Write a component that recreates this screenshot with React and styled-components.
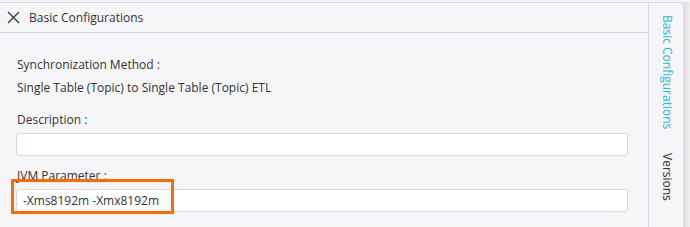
import React from 'react';
import styled, { createGlobalStyle } from 'styled-components';

const Global = createGlobalStyle`
  html, body { margin: 0; padding: 0; }
  body {
    background: #f6f6f9;
    font-family: 'Open Sans', 'Noto Sans', sans-serif;
    color: #333;
  }
`;

const Page = styled.div`
  width: 690px;
  height: 227px;
  padding-top: 2px;
  box-sizing: border-box;
  display: flex;
  overflow: hidden;
`;

const Frame = styled.div`
  flex: 1;
  display: flex;
  border-top: 1px solid #d3d5ea;
`;

const Main = styled.div`
  width: 648px;
  border-right: 1px solid #d3d5ea;
  display: flex;
  flex-direction: column;
`;

const Header = styled.div`
  height: 29px;
  border-bottom: 1px solid #d3d5ea;
  display: flex;
  align-items: center;
  gap: 9px;
  padding-left: 7px;
  font-size: 12px;
`;

const Body = styled.div`
  position: relative;
  padding: 24px 20px 0 16px;
`;

const Label = styled.div`
  font-size: 12px;
  line-height: 16px;
  margin-top: ${p => p.$top || 0}px;
  margin-left: 1px;
`;

const Input = styled.div`
  height: 21px;
  margin-top: ${p => p.$top || 0}px;
  background: #fff;
  border: 1px solid #d5d7ea;
  border-radius: 2px;
  font-size: 12px;
  line-height: 21px;
  padding-left: 6px;
`;

const Highlight = styled.div`
  position: absolute;
  left: 11px;
  top: 146px;
  width: 157px;
  height: 29px;
  border: 3px solid #fa6a0a;
`;

const Side = styled.div`
  width: 34px;
  display: flex;
  flex-direction: column;
  align-items: center;
`;

const Tab = styled.div`
  writing-mode: vertical-rl;
  font-size: 12px;
  color: ${p => (p.$active ? '#25b6e4' : '#333')};
  margin-top: ${p => p.$top}px;
  margin-left: 2px;
`;

const Shade = styled.div`
  width: 7px;
  background: linear-gradient(to right, #dcdcdf, #eeeef0);
`;

const CloseIcon = () => (
  <svg width="13" height="13" viewBox="0 0 13 13">
    <path d="M1 1L12 12M12 1L1 12" stroke="#333" strokeWidth="1.3" fill="none" />
  </svg>
);

export default function App() {
  return (
    <Page>
      <Global />
      <Frame>
        <Main>
          <Header>
            <CloseIcon />
            <span>Basic Configurations</span>
          </Header>
          <Body>
            <Label>Synchronization Method :</Label>
            <Label $top={7}>Single Table (Topic) to Single Table (Topic) ETL</Label>
            <Label $top={16}>Description :</Label>
            <Input $top={5} />
            <Label $top={12}>JVM Parameter :</Label>
            <Input $top={5}>-Xms8192m -Xmx8192m</Input>
            <Highlight />
          </Body>
        </Main>
        <Side>
          <Tab $active $top={12}>Basic Configurations</Tab>
          <Tab $top={24}>Versions</Tab>
        </Side>
      </Frame>
      <Shade />
    </Page>
  );
}
